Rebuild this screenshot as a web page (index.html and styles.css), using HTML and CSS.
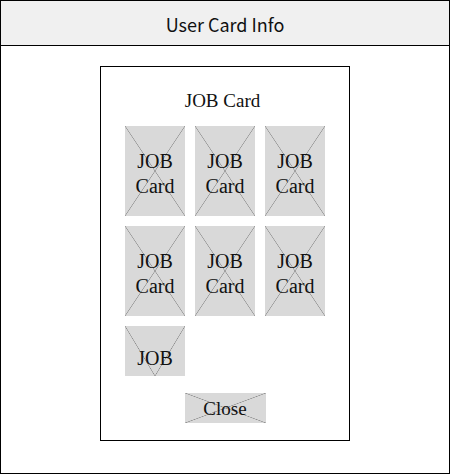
FILE: index.html
```html
<!DOCTYPE html>
<html lang="en">
<head>
    <meta charset="UTF-8">
    <meta name="viewport" content="width=device-width, initial-scale=1.0">
    <title>User Card Info</title>
    <link rel="stylesheet" href="styles.css">
</head>
<body>

    <div class="frame">

        <header class="frame-header">
            User Card Info
        </header>

        <main class="frame-body">
            <section class="job-card">
                <h2 class="job-title">JOB Card</h2>

                <div class="job-grid">
                    <div class="job-tile">JOB<br>Card</div>
                    <div class="job-tile">JOB<br>Card</div>
                    <div class="job-tile">JOB<br>Card</div>
                    <div class="job-tile">JOB<br>Card</div>
                    <div class="job-tile">JOB<br>Card</div>
                    <div class="job-tile">JOB<br>Card</div>
                    <!-- last tile is cut short, only the first word shows -->
                    <div class="job-tile job-tile-short">JOB</div>
                </div>

                <button class="btn-close">Close</button>
            </section>
        </main>

    </div>

</body>
</html>
```

FILE: styles.css
```css
/* Reset */
:root {
    --line-dark: #000000;
    --header-bg: #f0f0f0;
    --placeholder-bg: #d9d9d9;
    --placeholder-line: #8f8f8f;
}

* {
    margin: 0;
    padding: 0;
    box-sizing: border-box;
}

html, body {
    width: 100%;
    height: 100%;
    overflow: hidden;
    background-color: #ffffff;
}

/* Outer wireframe */
.frame {
    width: 450px;
    height: 474px;
    border: 1px solid var(--line-dark);
    display: flex;
    flex-direction: column;
}

.frame-header {
    height: 45px;
    flex-shrink: 0;
    display: flex;
    align-items: center;
    justify-content: center;
    padding-top: 1px;
    background-color: var(--header-bg);
    border-bottom: 1px solid var(--line-dark);
    font-family: 'Noto Sans CJK KR', 'Noto Sans', sans-serif;
    font-size: 18px;
    font-weight: 400;
    color: #111111;
}

.frame-body {
    flex-grow: 1;
    display: flex;
    justify-content: center;
    padding-top: 20px;
}

/* The card dialog */
.job-card {
    width: 250px;
    height: 375px;
    border: 1px solid var(--line-dark);
    display: flex;
    flex-direction: column;
    align-items: center;
    padding-top: 22px;
    font-family: 'Liberation Serif', 'DejaVu Serif', serif;
    color: #111111;
}

.job-title {
    font-size: 19px;
    font-weight: 400;
    line-height: 23px;
    padding-right: 5px;
}

.job-grid {
    display: grid;
    grid-template-columns: repeat(3, 60px);
    align-items: start;
    gap: 10px;
    margin-top: 14px;
}

/* Placeholder tile with a crossed box */
.job-tile {
    height: 90px;
    overflow: hidden;
    padding-top: 23px;
    text-align: center;
    font-size: 20px;
    line-height: 25px;
    background-color: var(--placeholder-bg);
    background-image:
        linear-gradient(to top right, transparent calc(50% - 0.6px), var(--placeholder-line) 50%, transparent calc(50% + 0.6px)),
        linear-gradient(to bottom right, transparent calc(50% - 0.6px), var(--placeholder-line) 50%, transparent calc(50% + 0.6px));
    background-repeat: no-repeat;
}

.job-tile-short {
    height: 50px;
    padding-top: 20px;
    background-size: 100% 200%;
    background-position: top;
}

.btn-close {
    width: 81px;
    height: 30px;
    margin-top: 17px;
    border: none;
    font-family: 'Liberation Serif', 'DejaVu Serif', serif;
    font-size: 19px;
    line-height: 22px;
    padding-top: 2px;
    color: #111111;
    background-color: var(--placeholder-bg);
    background-image:
        linear-gradient(to top right, transparent calc(50% - 0.6px), var(--placeholder-line) 50%, transparent calc(50% + 0.6px)),
        linear-gradient(to bottom right, transparent calc(50% - 0.6px), var(--placeholder-line) 50%, transparent calc(50% + 0.6px));
    cursor: pointer;
}
```
